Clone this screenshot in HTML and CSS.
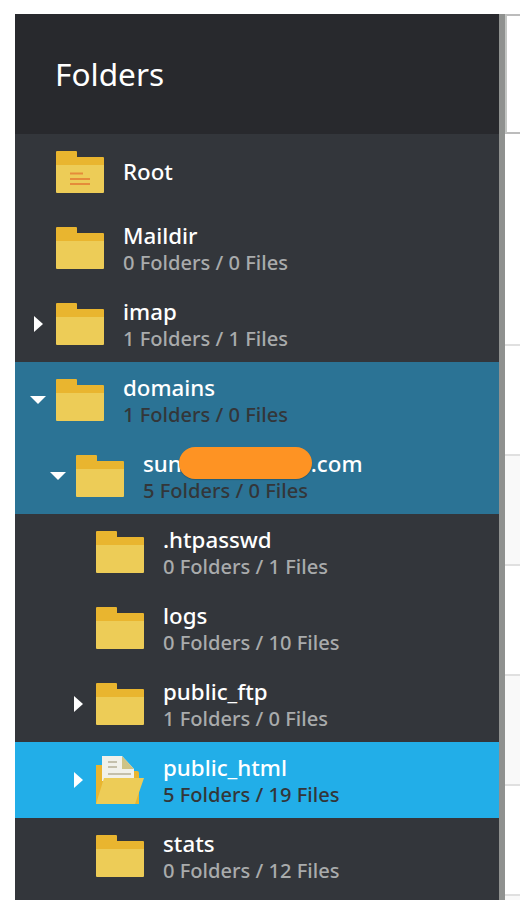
FILE: index.html
```html
<!DOCTYPE html>
<html lang="en">
<head>
<meta charset="utf-8">
<title>Folders</title>
<link rel="stylesheet" href="styles.css">
</head>
<body>
<svg class="defs" width="0" height="0" aria-hidden="true">
  <symbol id="folder" viewBox="0 0 48 42">
    <path fill="#e9b52f" d="M1 0h19a1 1 0 0 1 1 1v5h26a1 1 0 0 1 1 1v8H0V1a1 1 0 0 1 1-1z"/>
    <path fill="#edcc57" d="M0 14h48v27a1 1 0 0 1-1 1H1a1 1 0 0 1-1-1z"/>
  </symbol>
</svg>
<div class="app">
  <aside class="panel">
    <header class="panel-head">Folders</header>
    <ul class="tree">
      <li class="row root">
        <span class="caret"></span>
        <svg class="icon" viewBox="0 0 48 42"><use href="#folder"/><path class="lines" d="M14 22.500h13M14 28h20M14 33h20"/></svg>
        <div class="text"><div class="name">Root</div></div>
      </li>
      <li class="row">
        <span class="caret"></span>
        <svg class="icon"><use href="#folder"/></svg>
        <div class="text"><div class="name">Maildir</div><div class="meta">0 Folders / 0 Files</div></div>
      </li>
      <li class="row">
        <span class="caret right"></span>
        <svg class="icon"><use href="#folder"/></svg>
        <div class="text"><div class="name">imap</div><div class="meta">1 Folders / 1 Files</div></div>
      </li>
      <li class="row open">
        <span class="caret down"></span>
        <svg class="icon"><use href="#folder"/></svg>
        <div class="text"><div class="name">domains</div><div class="meta">1 Folders / 0 Files</div></div>
      </li>
      <li class="row open depth1">
        <span class="caret down"></span>
        <svg class="icon"><use href="#folder"/></svg>
        <div class="text"><div class="name">sun<span class="redact"></span>.com</div><div class="meta">5 Folders / 0 Files</div></div>
      </li>
      <li class="row depth2">
        <span class="caret"></span>
        <svg class="icon"><use href="#folder"/></svg>
        <div class="text"><div class="name">.htpasswd</div><div class="meta">0 Folders / 1 Files</div></div>
      </li>
      <li class="row depth2">
        <span class="caret"></span>
        <svg class="icon"><use href="#folder"/></svg>
        <div class="text"><div class="name">logs</div><div class="meta">0 Folders / 10 Files</div></div>
      </li>
      <li class="row depth2">
        <span class="caret right"></span>
        <svg class="icon"><use href="#folder"/></svg>
        <div class="text"><div class="name">public_ftp</div><div class="meta">1 Folders / 0 Files</div></div>
      </li>
      <li class="row depth2 selected">
        <span class="caret right"></span>
        <svg class="icon" viewBox="0 0 48 48">
          <path fill="#e9b52f" d="M0 9h6v13h32v-7h3a2 2 0 0 1 2 2v31H0z"/>
          <path fill="#f1f1ea" d="M6 0h20l12 13v12H6z"/>
          <path fill="#cdc487" d="M26 0l12 13H26z"/>
          <path class="doc-lines" d="M12 6h9M12 11h9M12 18h23"/>
          <path fill="#edcc57" d="M8 22h40l-9 26H0z"/>
        </svg>
        <div class="text"><div class="name">public_html</div><div class="meta">5 Folders / 19 Files</div></div>
      </li>
      <li class="row depth2">
        <span class="caret"></span>
        <svg class="icon"><use href="#folder"/></svg>
        <div class="text"><div class="name">stats</div><div class="meta">0 Folders / 12 Files</div></div>
      </li>
    </ul>
  </aside>
  <div class="scrollbar"></div>
  <section class="files">
    <div class="files-head"></div>
    <div class="file tall"></div>
    <div class="file"></div>
    <div class="file alt"></div>
    <div class="file"></div>
    <div class="file alt"></div>
    <div class="file"></div>
    <div class="file alt"></div>
  </section>
</div>
</body>
</html>
```
FILE: styles.css
```css
* { box-sizing: border-box; }
html, body { margin: 0; height: 100%; background: #fff; overflow: hidden; }
body { font-family: "Noto Sans", "Open Sans", sans-serif; }
.defs { display: block; height: 0; }
.app { display: flex; height: 886px; margin: 14px 0 0 15px; overflow: hidden; }
.panel { width: 484px; background: #33363b; flex: none; }
.panel-head {
  height: 120px; background: #28292d; color: #fff;
  font-size: 31.6px; line-height: 120px; padding-left: 40px;
}
.tree { list-style: none; margin: 0; padding: 0; }
.row { display: flex; align-items: center; height: 76px; padding-left: 17px; }
.depth1 { padding-left: 37px; }
.depth2 { padding-left: 57px; }
.open { background: #2b7395; }
.selected { background: #22aee8; }
.caret { width: 24px; height: 12px; flex: none; position: relative; }
.caret.right::before {
  content: ""; position: absolute; left: 2px; top: -2px;
  border-left: 9px solid #fff; border-top: 8px solid transparent; border-bottom: 8px solid transparent;
}
.caret.down::before {
  content: ""; position: absolute; left: -2px; top: 2px;
  border-top: 8px solid #fff; border-left: 8px solid transparent; border-right: 8px solid transparent;
}
.icon { width: 48px; height: 42px; flex: none; display: block; }
.selected .icon { height: 48px; }
.lines { stroke: #e58c3a; stroke-width: 2; fill: none; }
.doc-lines { stroke: #c4c0ac; stroke-width: 2; fill: none; }
.text { margin-left: 19px; line-height: 26px; padding-top: 3px; }
.root .text { padding: 0; }
.name { color: #fff; font-size: 22.3px; font-weight: 500; white-space: nowrap; }
.meta { color: #a9abac; font-size: 20.1px; font-weight: 500; margin-top: 1px; }
.open .meta, .selected .meta { color: #333639; }
.redact {
  display: inline-block; width: 133px; height: 32px; margin: -8px -1px -8px -3px;
  background: #fe9323; border-radius: 16px;
  box-shadow: 0 1px 1px rgba(30,70,90,.5);
  vertical-align: 1px;
}
.scrollbar { width: 6px; background: #8f918f; flex: none; }
.files { flex: 1; min-width: 0; }
.file { height: 110px; border-bottom: 2px solid #e0e0e0; background: #fff; }
.file.alt { background: #f9f9f9; }
.file.tall { height: 212px; }
.files-head { height: 120px; border-top: 2px solid #bcbcbc; border-left: 2px solid #c4c6c4; border-bottom: 2px solid #bcbcbc; background: #fff; }
```
